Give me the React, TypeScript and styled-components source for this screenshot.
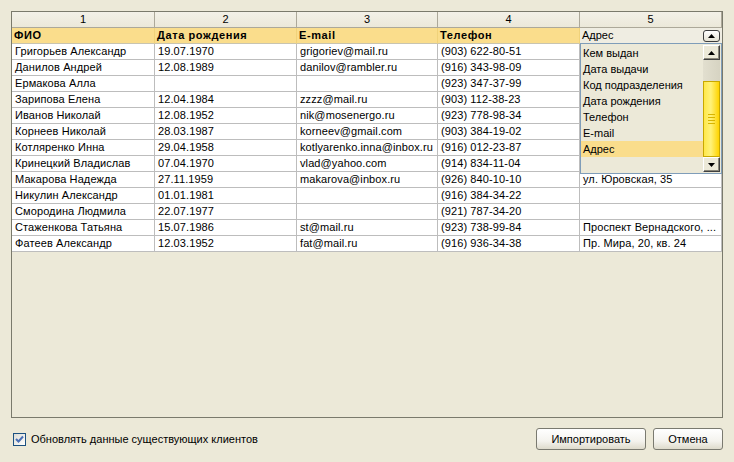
import React from "react"
import styled, { createGlobalStyle } from "styled-components"

const GlobalStyle = createGlobalStyle`
  html, body {
    margin: 0;
    padding: 0;
    background: #ece9d8;
  }
  body {
    font-family: "Liberation Sans", Arial, sans-serif;
    font-size: 11px;
    color: #000;
  }
`;

const COLS = [143, 142, 141, 142, 142];

const Window = styled.div`
  width: 734px;
  height: 462px;
  box-sizing: border-box;
  padding: 11px 11px 12px 11px;
  display: flex;
  flex-direction: column;
  background: #ece9d8;
`;

const GridFrame = styled.div`
  position: relative;
  flex: 1;
  border: 1px solid #7a7a6c;
  background: #ece9d8;
  overflow: hidden;
`;

const Grid = styled.div`
  display: grid;
  grid-template-columns: ${COLS.map(c => `${c}px`).join(" ")};
  grid-auto-rows: 16px;
`;

const NumCell = styled.div`
  box-sizing: border-box;
  border-right: 1px solid #aca899;
  border-bottom: 1px solid #aca899;
  background: linear-gradient(#f3f1e8, #ebe8d9);
  text-align: center;
  line-height: 15px;
`;

const FieldCell = styled.div`
  box-sizing: border-box;
  border-right: 1px solid #f0d27a;
  border-bottom: 1px solid #c8c4b0;
  background: #fadd8c;
  font-weight: bold;
  letter-spacing: 0.6px;
  padding-left: 2px;
  line-height: 15px;
  white-space: nowrap;
  overflow: hidden;
`;

const ComboCell = styled.div`
  box-sizing: border-box;
  display: flex;
  align-items: center;
  justify-content: space-between;
  border-bottom: 1px solid #c8c4b0;
  background: #efede2;
  padding: 0 2px 0 2px;
  line-height: 15px;
`;

const ComboButton = styled.div`
  width: 17px;
  height: 12px;
  box-sizing: border-box;
  border: 1px solid #3c3c3c;
  border-radius: 3px;
  background: linear-gradient(#ffffff, #e4e1d2);
  display: flex;
  align-items: center;
  justify-content: center;
`;

const DataCell = styled.div`
  box-sizing: border-box;
  border-right: 1px solid #bdbdbd;
  border-bottom: 1px solid #bdbdbd;
  background: #fff;
  padding-left: 3px;
  letter-spacing: 0.1px;
  line-height: 15px;
  white-space: nowrap;
  overflow: hidden;
`;

const Dropdown = styled.div`
  position: absolute;
  left: 568px;
  top: 31px;
  width: 142px;
  height: 131px;
  box-sizing: border-box;
  border: 1px solid #7f9db9;
  background: #ece9d8;
  padding: 1px 1px 1px 0;
  display: flex;
`;

const ItemList = styled.div`
  flex: 1;
  display: flex;
  flex-direction: column;
`;

const Item = styled.div<{ selected?: boolean }>`
  height: 16px;
  line-height: 16px;
  padding-left: 2px;
  background: ${p => p.selected ? "#fadd8c" : "transparent"};
  white-space: nowrap;
`;

const ScrollBar = styled.div`
  width: 17px;
  display: flex;
  flex-direction: column;
`;

const ScrollButton = styled.div`
  height: 15px;
  box-sizing: border-box;
  border: 1px solid;
  border-color: #ffffff #404040 #404040 #ffffff;
  box-shadow: inset -1px -1px 0 #8a877a;
  background: #ece9d8;
  display: flex;
  align-items: center;
  justify-content: center;
`;

const Track = styled.div<{ h: number }>`
  height: ${p => p.h}px;
  background: linear-gradient(90deg, #e2dfcf, #d6d3c2);
`;

const Thumb = styled.div`
  flex: 1;
  box-sizing: border-box;
  border: 1px solid #c8a800;
  background: linear-gradient(90deg, #ffe84a, #fff27a 45%, #ffd400);
  display: flex;
  flex-direction: column;
  align-items: center;
  justify-content: center;
  gap: 2px;
`;

const Grip = styled.div`
  width: 7px;
  height: 1px;
  background: #d8b400;
`;

const Footer = styled.div`
  display: flex;
  align-items: center;
  justify-content: space-between;
  height: 22px;
  margin-top: 10px;
`;

const CheckLabel = styled.label`
  display: flex;
  align-items: center;
  gap: 5px;
  padding-left: 2px;
`;

const CheckBox = styled.span`
  width: 13px;
  height: 13px;
  box-sizing: border-box;
  border: 1px solid #1c5180;
  background: linear-gradient(135deg, #dcdcd5, #ffffff);
  display: flex;
  align-items: center;
  justify-content: center;
`;

const Buttons = styled.div`
  display: flex;
  gap: 7px;
`;

const Button = styled.button<{ w: number }>`
  width: ${p => p.w}px;
  height: 22px;
  box-sizing: border-box;
  border: 1px solid #7a7a70;
  border-radius: 3px;
  background: linear-gradient(#ffffff, #f4f3ee 60%, #dedbcc);
  font-family: "Liberation Sans", Arial, sans-serif;
  font-size: 11px;
  color: #000;
  padding: 0;
`;

const Arrow = ({ up }: { up?: boolean }) => (
  <svg width="7" height="4" viewBox="0 0 7 4">
    <path d={up ? "M0 4 L3.5 0 L7 4 Z" : "M0 0 L3.5 4 L7 0 Z"} fill="#000" />
  </svg>
);

const fields = ["ФИО", "Дата рождения", "E-mail", "Телефон"];

const rows = [
  ["Григорьев Александр", "19.07.1970", "grigoriev@mail.ru", "(903) 622-80-51", ""],
  ["Данилов Андрей", "12.08.1989", "danilov@rambler.ru", "(916) 343-98-09", ""],
  ["Ермакова Алла", "", "", "(923) 347-37-99", ""],
  ["Зарипова Елена", "12.04.1984", "zzzz@mail.ru", "(903) 112-38-23", ""],
  ["Иванов Николай", "12.08.1952", "nik@mosenergo.ru", "(923) 778-98-34", ""],
  ["Корнеев Николай", "28.03.1987", "korneev@gmail.com", "(903) 384-19-02", ""],
  ["Котляренко Инна", "29.04.1958", "kotlyarenko.inna@inbox.ru", "(916) 012-23-87", ""],
  ["Кринецкий Владислав", "07.04.1970", "vlad@yahoo.com", "(914) 834-11-04", ""],
  ["Макарова Надежда", "27.11.1959", "makarova@inbox.ru", "(926) 840-10-10", "ул. Юровская, 35"],
  ["Никулин Александр", "01.01.1981", "", "(916) 384-34-22", ""],
  ["Смородина Людмила", "22.07.1977", "", "(921) 787-34-20", ""],
  ["Стаженкова Татьяна", "15.07.1986", "st@mail.ru", "(923) 738-99-84", "Проспект Вернадского, ..."],
  ["Фатеев Александр", "12.03.1952", "fat@mail.ru", "(916) 936-34-38", "Пр. Мира, 20, кв. 24"],
];

const options = ["Кем выдан", "Дата выдачи", "Код подразделения", "Дата рождения", "Телефон", "E-mail", "Адрес"];

export default function App() {
  return <>
    <GlobalStyle />
    <Window>
      <GridFrame>
        <Grid>
          {COLS.map((_, i) => <NumCell key={i}>{i + 1}</NumCell>)}
          {fields.map(f => <FieldCell key={f}>{f}</FieldCell>)}
          <ComboCell>
            <span>Адрес</span>
            <ComboButton><Arrow up /></ComboButton>
          </ComboCell>
          {rows.map((r, i) => r.map((c, j) => <DataCell key={`${i}-${j}`}>{c}</DataCell>))}
        </Grid>
        <Dropdown>
          <ItemList>
            {options.map(o => <Item key={o} selected={o === "Адрес"}>{o}</Item>)}
          </ItemList>
          <ScrollBar>
            <ScrollButton><Arrow up /></ScrollButton>
            <Track h={21} />
            <Thumb>
              <Grip /><Grip /><Grip /><Grip />
            </Thumb>
            <ScrollButton><Arrow /></ScrollButton>
          </ScrollBar>
        </Dropdown>
      </GridFrame>
      <Footer>
        <CheckLabel>
          <CheckBox>
            <svg width="9" height="9" viewBox="0 0 9 9">
              <path d="M1 4 L3.5 6.5 L8 1.5" stroke="#4a6fb5" strokeWidth="2" fill="none" />
            </svg>
          </CheckBox>
          Обновлять данные существующих клиентов
        </CheckLabel>
        <Buttons>
          <Button w={110}>Импортировать</Button>
          <Button w={70}>Отмена</Button>
        </Buttons>
      </Footer>
    </Window>
  </>
}
